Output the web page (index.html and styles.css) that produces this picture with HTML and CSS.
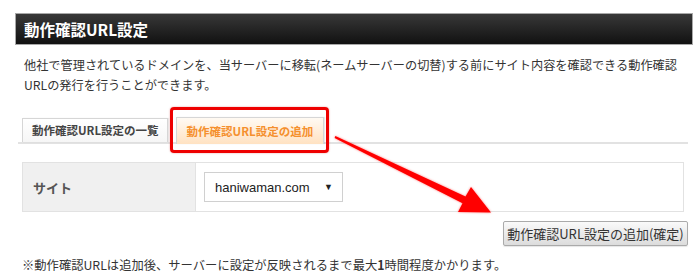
FILE: index.html
```html
<!DOCTYPE html>
<html lang="ja">
<head>
    <meta charset="UTF-8">
    <title>動作確認URL設定</title>
    <link rel="stylesheet" href="styles.css">
</head>
<body>
    <div class="page">
        <h2 class="page-title">動作確認URL設定</h2>
        <p class="lead">他社で管理されているドメインを、当サーバーに移転(ネームサーバーの切替)する前にサイト内容を確認できる動作確認URLの発行を行うことができます。</p>

        <div class="content">
            <div class="tabs">
                <div class="tab">動作確認URL設定の一覧</div>
                <div class="tab tab-active">動作確認URL設定の追加</div>
            </div>

            <table class="form-table">
                <tr>
                    <th>サイト</th>
                    <td>
                        <div class="select">
                            <span>haniwaman.com</span>
                            <span class="select-arrow">▼</span>
                        </div>
                    </td>
                </tr>
            </table>

            <div class="actions">
                <button class="btn">動作確認URL設定の追加(確定)</button>
            </div>
        </div>

        <p class="note">※動作確認URLは追加後、サーバーに設定が反映されるまで最大<b>1</b>時間程度かかります。</p>
    </div>

    <!-- 注釈の矢印 -->
    <svg class="arrow" width="700" height="280" viewBox="0 0 700 280">
        <polygon points="335.4,136.1 465.5,196.5 471,187 491,212.5 458,212 462.5,203.2 334.6,137.9" fill="#ff0000"/>
    </svg>
</body>
</html>
```

FILE: styles.css
```css
body {
    margin: 0;
    font-family: "Noto Sans CJK JP", "Noto Sans", sans-serif;
    color: #333;
    background: #fff;
    position: relative;
    width: 700px;
    height: 280px;
    overflow: hidden;
}
.page {
    padding: 13px 7px 0 15px;
}
.page-title {
    margin: 0;
    height: 30px;
    line-height: 30px;
    padding-left: 8px;
    font-size: 15.5px;
    font-weight: bold;
    color: #fff;
    background: linear-gradient(to bottom, #383838, #111);
    border: 1px solid #a8a8a8;
}
.lead {
    margin: 10px 0 0;
    padding: 0 5px 0 9px;
    font-size: 12.2px;
    line-height: 20px;
    color: #333;
}
.content {
    margin: 20px 5px 0 3px;
}
.tabs {
    display: flex;
    align-items: flex-end;
    gap: 8px;
    padding: 0 4px;
    height: 27px;
    border-bottom: 2px solid #e2e2e2;
}
.tab {
    height: 23px;
    line-height: 23px;
    padding: 0 8px 0 9px;
    font-size: 11.5px;
    font-weight: bold;
    color: #444;
    background: linear-gradient(to bottom, #fff, #f6f6f6);
    border: 1px solid #d6d6d6;
    border-bottom: none;
    box-shadow: 1px 0 1px rgba(0, 0, 0, 0.08);
}
.tab-active {
    position: relative;
    height: 26px;
    line-height: 26px;
    margin-bottom: -2px;
    padding: 0 10px 0 10px;
    color: #f5902e;
    background: linear-gradient(to bottom, #fffaf3, #ffe2c2);
}
.tab-active::after {
    content: "";
    position: absolute;
    top: -11px;
    left: -7px;
    right: -6px;
    bottom: -9px;
    border: 3px solid #ee0000;
    border-radius: 4px;
    box-shadow: 0 0 2px rgba(200, 0, 0, 0.4);
}
.form-table {
    width: calc(100% - 8px);
    margin: 18px 4px 0;
    border-collapse: collapse;
    border: 1px solid #e2e2e2;
}
.form-table th {
    width: 162px;
    height: 48px;
    padding: 0 0 0 10px;
    text-align: left;
    font-size: 13px;
    font-weight: bold;
    color: #555;
    background: #f0f0f0;
    border-right: 1px solid #e2e2e2;
}
.form-table td {
    padding: 0 0 0 8px;
}
.select {
    display: flex;
    align-items: center;
    justify-content: space-between;
    width: 118px;
    height: 28px;
    padding: 0 9px 0 10px;
    font-family: "Liberation Sans", Arial, sans-serif;
    font-size: 13px;
    color: #222;
    border: 1px solid #d0d0d0;
    background: #fff;
}
.select-arrow {
    font-size: 9px;
    color: #222;
}
.actions {
    display: flex;
    justify-content: flex-end;
    margin-top: 9px;
}
.btn {
    height: 25px;
    width: 185px;
    padding: 0;
    font-family: "Noto Sans CJK JP", sans-serif;
    font-size: 13px;
    color: #333;
    background: linear-gradient(to bottom, #fafafa, #dcdcdc);
    border: 1px solid #aaa;
    border-radius: 2px;
    box-shadow: 0 1px 1px rgba(0, 0, 0, 0.1);
}
.note {
    margin: 9px 0 0;
    padding-left: 7px;
    font-size: 12.3px;
    line-height: 20px;
    color: #333;
}
.arrow {
    position: absolute;
    left: 0;
    top: 0;
    pointer-events: none;
    filter: drop-shadow(0 0 1px rgba(255, 0, 0, 0.5));
}
```
